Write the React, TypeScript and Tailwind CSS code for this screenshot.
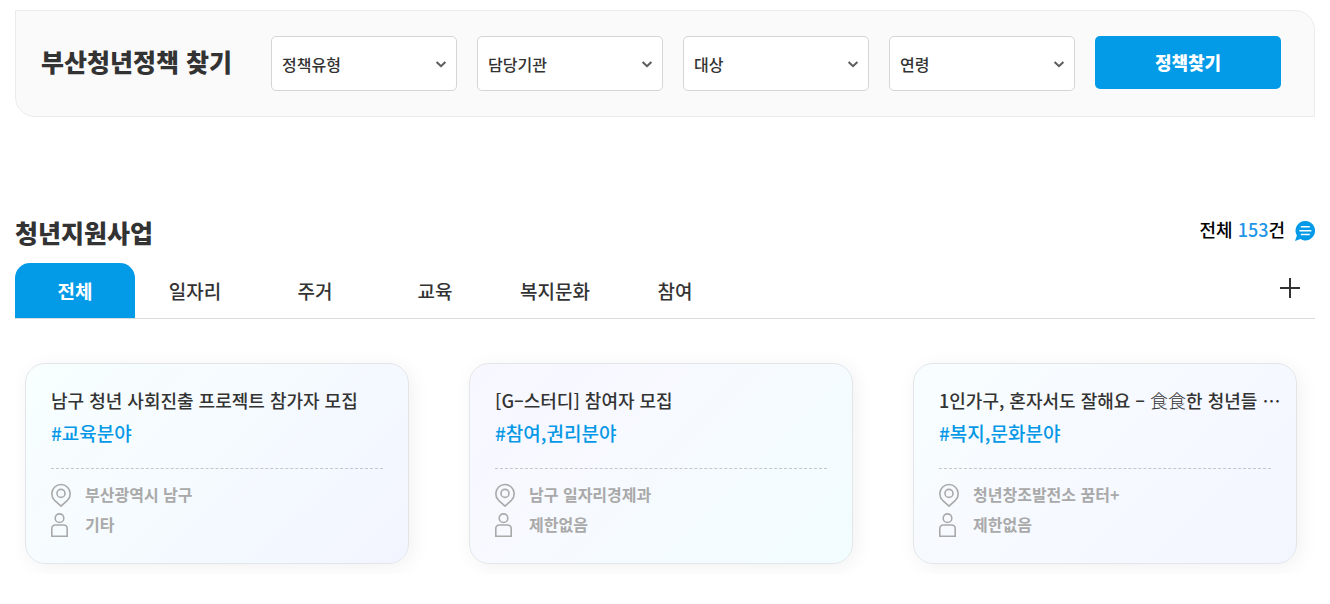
import { useState, type ReactNode } from "react";

const filters = [
  { id: "type", label: "정책유형", options: ["일자리", "주거", "교육"] },
  { id: "agency", label: "담당기관", options: ["부산광역시", "남구"] },
  { id: "target", label: "대상", options: ["제한없음", "기타"] },
  { id: "age", label: "연령", options: ["20대", "30대"] },
];

const tabs = ["전체", "일자리", "주거", "교육", "복지문화", "참여"];

type Program = { id: number; title: ReactNode; tag: string; place: string; target: string; tone: string };

const programs: Program[] = [
  {
    id: 1,
    title: "남구 청년 사회진출 프로젝트 참가자 모집",
    tag: "#교육분야",
    place: "부산광역시 남구",
    target: "기타",
    tone: "from-[#f8fffe] via-[#f5faff] to-[#f2f5ff]",
  },
  {
    id: 2,
    title: "[G–스터디] 참여자 모집",
    tag: "#참여,권리분야",
    place: "남구 일자리경제과",
    target: "제한없음",
    tone: "from-[#f8f7ff] via-[#f6faff] to-[#f2fdff]",
  },
  {
    id: 3,
    title: (
      <>
        1인가구, 혼자서도 잘해요 – <span className="font-light">食食</span>한 청년들 ⋯
      </>
    ),
    tag: "#복지,문화분야",
    place: "청년창조발전소 꿈터+",
    target: "제한없음",
    tone: "from-[#f8feff] via-[#f6f9ff] to-[#f3f6ff]",
  },
];

function Chevron() {
  return (
    <svg className="pointer-events-none absolute top-1/2 right-2 size-4 -translate-y-1/2" viewBox="0 0 16 16" fill="none" stroke="#5b5b5b" strokeWidth="2" aria-hidden="true">
      <path d="M3.6 6 8 10.2 12.4 6" />
    </svg>
  );
}

function PinIcon() {
  return (
    <svg className="h-[26px] w-5" viewBox="0 0 20 26" fill="none" stroke="#a9a9a9" strokeWidth="1.6" role="img" aria-label="기관">
      <path d="M10 25.2 3.6 19.3A9.2 9.2 0 0 1 .8 12.7 9.2 9.2 0 0 1 19.2 12.7a9.2 9.2 0 0 1-2.8 6.6Z" strokeLinejoin="round" />
      <circle cx="10" cy="12.4" r="4" />
    </svg>
  );
}

function PersonIcon() {
  return (
    <svg className="h-[26px] w-5" viewBox="0 0 20 26" fill="none" stroke="#a9a9a9" strokeWidth="1.6" role="img" aria-label="대상">
      <circle cx="8.5" cy="7.2" r="4.3" />
      <path d="M.8 25.2v-7.8a3.4 3.4 0 0 1 3.4-3.4h8.6a3.4 3.4 0 0 1 3.4 3.4v7.8Z" />
    </svg>
  );
}

function ChatIcon() {
  return (
    <svg className="size-5" viewBox="0 0 20 20" aria-hidden="true">
      <path d="M10.3 0a9.7 9.7 0 1 1-4.8 18.1L0 20l1.9-5.4A9.7 9.7 0 0 1 10.3 0Z" fill="#039be8" />
      <path d="M5.8 5.8h9M4.4 9.8h12M5.8 13.6h9" stroke="#fff" strokeWidth="1.5" />
    </svg>
  );
}

export default function App() {
  const [active, setActive] = useState("전체");
  return (
    <main lang="ko" className="bg-white px-[15px] pt-[10px] pb-[30px] font-['Noto_Sans_CJK_KR',sans-serif] font-medium text-[#333]">
      <form
        onSubmit={(e) => e.preventDefault()}
        className="flex items-start rounded-tr-[20px] rounded-bl-[20px] border border-[#ebebeb] bg-[#fafafa] py-[25px] pr-[33px] pl-[25px]"
      >
        <h2 className="w-[230px] shrink-0 text-[25px] leading-[51px] font-black">부산청년정책 찾기</h2>
        <div className="grid grow grid-cols-5 items-start gap-5">
          {filters.map((f) => (
            <div key={f.id} className="relative">
              <select
                id={f.id}
                aria-label={f.label}
                className="h-[55px] w-full appearance-none rounded-[5px] border border-[#d5d5d5] bg-white pl-[10px] text-[16px]"
              >
                <option>{f.label}</option>
                {f.options.map((o) => (
                  <option key={o}>{o}</option>
                ))}
              </select>
              <Chevron />
            </div>
          ))}
          <button type="submit" className="h-[53px] rounded-[5px] bg-[#039be8] text-[18px] font-black text-white">
            정책찾기
          </button>
        </div>
      </form>

      <section className="pt-[98px]">
        <div className="flex h-12 items-start justify-between">
          <h2 className="text-[25px] leading-[34px] font-black">청년지원사업</h2>
          <div className="flex items-start gap-[10px] text-[18px] leading-7 text-black">
            <p>
              전체 <span className="text-[#1f96e8]">153</span>건
            </p>
            <span className="pt-[6px]">
              <ChatIcon />
            </span>
          </div>
        </div>

        <div className="flex items-center justify-between border-b border-[#d9dcdc]">
          <div role="tablist" className="flex">
            {tabs.map((t) => (
              <button
                key={t}
                type="button"
                role="tab"
                aria-selected={active === t}
                onClick={() => setActive(t)}
                className={
                  active === t
                    ? "h-[55px] w-[120px] rounded-t-[15px] bg-[#039be8] pt-[2px] text-[19px] font-bold text-white"
                    : "h-[55px] w-[120px] pt-[2px] text-[19px]"
                }
              >
                {t}
              </button>
            ))}
          </div>
          <button type="button" aria-label="더보기" className="mr-[15px] mb-[5px]">
            <svg className="size-5" viewBox="0 0 20 20" stroke="#333" strokeWidth="2" aria-hidden="true">
              <path d="M10 0v20M0 10h20" />
            </svg>
          </button>
        </div>

        <ul className="mt-[34px] grid grid-cols-3 gap-[60px] overflow-hidden pt-[10px] pr-[18px] pb-[10px] pl-[10px]">
          {programs.map((p) => (
            <li
              key={p.id}
              className={`min-w-0 rounded-[20px] border border-[#e3e6e8] bg-linear-135 px-[25px] pt-5 pb-6 shadow-[3px_3px_20px_rgba(0,0,0,0.06)] ${p.tone}`}
            >
              <h3 className="text-[18px] leading-8 whitespace-nowrap">{p.title}</h3>
              <p className="border-b border-dashed border-[#c4c7c9] pt-px pb-[19px] text-[19px] leading-8 text-[#0598e6]">{p.tag}</p>
              <dl className="pt-[10px] text-[16px] leading-[30px] font-bold text-[#a9a9a9]">
                <div className="flex items-center gap-[14px]">
                  <dt><PinIcon /></dt>
                  <dd>{p.place}</dd>
                </div>
                <div className="flex items-center gap-[14px]">
                  <dt><PersonIcon /></dt>
                  <dd>{p.target}</dd>
                </div>
              </dl>
            </li>
          ))}
        </ul>
      </section>
    </main>
  );
}
